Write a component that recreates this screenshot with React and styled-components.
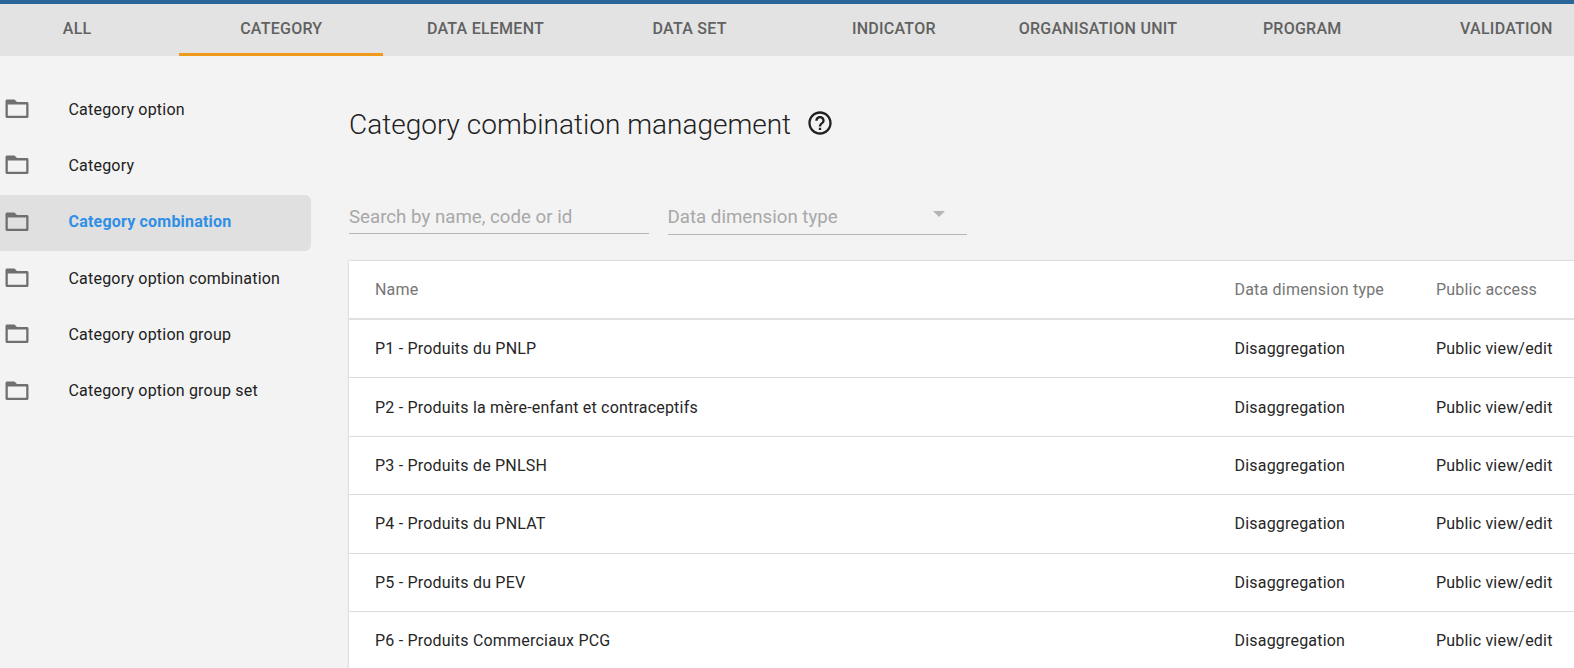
import React from 'react';
import styled, { createGlobalStyle } from 'styled-components';

const GlobalStyle = createGlobalStyle`
  html, body {
    margin: 0;
    height: 100%;
    overflow: hidden;
    background: #f3f3f3;
    font-family: Roboto, "Liberation Sans", sans-serif;
  }
`;

const Page = styled.div`
  height: 668px;
  overflow: hidden;
  border-top: 4px solid #2b6699;
  box-sizing: border-box;
`;

const TabBar = styled.nav`
  display: flex;
  height: 52px;
  margin-left: -25px;
  background: #e3e3e3;
  width: 1599px;
  overflow: hidden;
`;

const Tab = styled.div`
  flex: 0 0 204.2px;
  box-sizing: border-box;
  display: flex;
  align-items: center;
  justify-content: center;
  padding-bottom: 1px;
  font-size: 16px;
  font-weight: 500;
  letter-spacing: 0.25px;
  color: #616161;
  white-space: nowrap;
  border-bottom: 3px solid ${p => (p.$active ? '#f09a1c' : 'transparent')};
`;

const Body = styled.div`
  display: flex;
`;

const Sidebar = styled.aside`
  flex: 0 0 311px;
  padding-top: 26px;
  margin-right: 38px;
`;

const SideItem = styled.div`
  display: flex;
  align-items: center;
  height: 56.3px;
  box-sizing: border-box;
  padding: 0 0 2px 5px;
  border-radius: 0 6px 6px 0;
  font-size: 16px;
  letter-spacing: 0.2px;
  font-weight: ${p => (p.$active ? 700 : 400)};
  color: ${p => (p.$active ? '#2f8fe6' : '#212121')};
  background: ${p => (p.$active ? '#e0e0e0' : 'transparent')};
`;

const FolderIcon = styled.svg`
  flex: 0 0 24px;
  width: 24px;
  height: 20px;
  margin-right: 39.5px;
`;

const Main = styled.main`
  flex: 1;
  min-width: 0;
`;

const TitleRow = styled.div`
  display: flex;
  align-items: center;
  gap: 15px;
  height: 40px;
  margin-top: 48px;
`;

const Title = styled.h1`
  margin: 0;
  font-size: 28px;
  font-weight: 300;
  color: #212121;
`;

const HelpIcon = styled.svg`
  width: 28px;
  height: 28px;
  margin-bottom: 3px;
`;

const Filters = styled.div`
  display: flex;
  align-items: flex-start;
  gap: 19px;
  margin-top: 52px;
`;

const Field = styled.div`
  position: relative;
  width: 299.5px;
  height: ${p => (p.$select ? '39px' : '38px')};
  padding-top: ${p => (p.$select ? '4px' : '5px')};
  box-sizing: border-box;
  display: flex;
  align-items: center;
  font-size: 18.7px;
  color: #a8a8a8;
  border-bottom: 1px solid #b5b5b5;
`;

const Caret = styled.span`
  position: absolute;
  right: 22.5px;
  top: 15px;
  width: 0;
  height: 0;
  border-left: 6px solid transparent;
  border-right: 6px solid transparent;
  border-top: 6px solid #b5b5b5;
`;

const Table = styled.div`
  margin-top: 26px;
  background: #fff;
  box-shadow: 0 0 2px rgba(0, 0, 0, 0.25);
`;

const Row = styled.div`
  display: grid;
  grid-template-columns: 859.5px 201.5px 1fr;
  align-items: center;
  height: ${p => (p.$head ? '59px' : '58.4px')};
  box-sizing: border-box;
  padding-left: 26px;
  font-size: 16px;
  letter-spacing: 0.2px;
  white-space: nowrap;
  color: ${p => (p.$head ? '#757575' : '#262626')};
  border-bottom: ${p => (p.$head ? '2px solid #e0e0e0' : '1px solid #dcdcdc')};
`;

const tabs = ['ALL', 'CATEGORY', 'DATA ELEMENT', 'DATA SET', 'INDICATOR', 'ORGANISATION UNIT', 'PROGRAM', 'VALIDATION'];

const sideItems = [
  'Category option',
  'Category',
  'Category combination',
  'Category option combination',
  'Category option group',
  'Category option group set',
];

const rows = [
  'P1 - Produits du PNLP',
  'P2 - Produits la mère-enfant et contraceptifs',
  'P3 - Produits de PNLSH',
  'P4 - Produits du PNLAT',
  'P5 - Produits du PEV',
  'P6 - Produits Commerciaux PCG',
];

const Folder = () => (
  <FolderIcon viewBox="0 0 24 20">
    <path
      d="M2 0.500h7.500l2.500 2.500h10c.8 0 1.500.7 1.500 1.500v13c0 .8-.7 1.500-1.500 1.500H2c-.8 0-1.500-.7-1.500-1.500V2C.5 1.200 1.200.5 2 .5zM2.800 5.500V16.800h18.400V5.500z"
      fill="#707070"
      fillRule="evenodd"
    />
  </FolderIcon>
);

const Help = () => (
  <HelpIcon viewBox="0 0 24 24">
    <path
      d="M11 18h2v-2h-2v2zm1-16C6.480 2 2 6.480 2 12s4.480 10 10 10 10-4.480 10-10S17.520 2 12 2zm0 18c-4.410 0-8-3.590-8-8s3.590-8 8-8 8 3.590 8 8-3.590 8-8 8zm0-14c-2.210 0-4 1.790-4 4h2c0-1.100.9-2 2-2s2 .9 2 2c0 2-3 1.750-3 5h2c0-2.250 3-2.500 3-5 0-2.210-1.790-4-4-4z"
      fill="#212121"
    />
  </HelpIcon>
);

export default function App() {
  return (
    <Page>
      <GlobalStyle />
      <TabBar>
        {tabs.map(t => (
          <Tab key={t} $active={t === 'CATEGORY'}>{t}</Tab>
        ))}
      </TabBar>
      <Body>
        <Sidebar>
          {sideItems.map(s => (
            <SideItem key={s} $active={s === 'Category combination'}>
              <Folder />
              {s}
            </SideItem>
          ))}
        </Sidebar>
        <Main>
          <TitleRow>
            <Title>Category combination management</Title>
            <Help />
          </TitleRow>
          <Filters>
            <Field>Search by name, code or id</Field>
            <Field $select>
              Data dimension type
              <Caret />
            </Field>
          </Filters>
          <Table>
            <Row $head>
              <span>Name</span>
              <span>Data dimension type</span>
              <span>Public access</span>
            </Row>
            {rows.map(r => (
              <Row key={r}>
                <span>{r}</span>
                <span>Disaggregation</span>
                <span>Public view/edit</span>
              </Row>
            ))}
          </Table>
        </Main>
      </Body>
    </Page>
  );
}
